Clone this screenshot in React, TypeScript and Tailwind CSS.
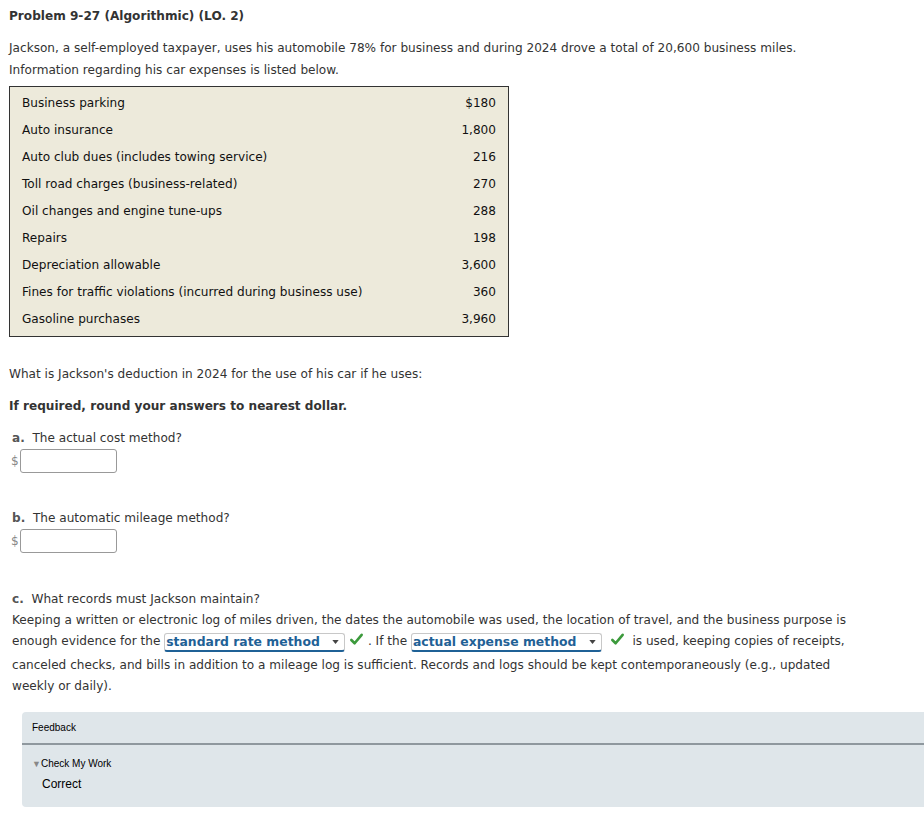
import { useState } from 'react'

const expenses = [
  { label: 'Business parking', amount: '$180' },
  { label: 'Auto insurance', amount: '1,800' },
  { label: 'Auto club dues (includes towing service)', amount: '216' },
  { label: 'Toll road charges (business-related)', amount: '270' },
  { label: 'Oil changes and engine tune-ups', amount: '288' },
  { label: 'Repairs', amount: '198' },
  { label: 'Depreciation allowable', amount: '3,600' },
  { label: 'Fines for traffic violations (incurred during business use)', amount: '360' },
  { label: 'Gasoline purchases', amount: '3,960' },
]

function Check() {
  return (
    <svg viewBox="0 0 16 16" className="inline-block h-[15px] w-[15px] align-[-2px]">
      <path d="M2.5 8.5 L6 12 L13.5 3" fill="none" stroke="#3c9a3c" strokeWidth="2.8" strokeLinecap="round" strokeLinejoin="round" />
    </svg>
  )
}

function Dropdown({ value, width }: { value: string; width: string }) {
  return (
    <span
      className={`relative mb-[3px] inline-flex h-[19px] items-center rounded-[3px] border border-[#c8c8c8] border-b-2 border-b-[#1f6196] pl-[1px] align-[-1px] ${width}`}
    >
      <span className="text-[12.4px] font-bold leading-[15px] text-[#1f6196]">{value}</span>
      <svg viewBox="0 0 8 5" className="absolute right-[5px] top-[6px] h-[4px] w-[7px]">
        <path d="M0 0 L8 0 L4 5 Z" fill="#444" />
      </svg>
    </span>
  )
}

function MoneyInput() {
  const [val, setVal] = useState('')
  return (
    <div className="flex items-center">
      <span className="w-[9px] text-[#888]">$</span>
      <input
        value={val}
        onChange={(e) => setVal(e.target.value)}
        className="h-[24px] w-[97px] rounded-[3px] border border-[#999] bg-white outline-none"
      />
    </div>
  )
}

export default function App() {
  return (
    <div className="min-h-screen bg-white text-[12.1px] text-[#333] font-['DejaVu_Sans',Verdana,sans-serif]">
      <div className="pl-[9px] pt-[7px]">
        {/* Title */}
        <h1 className="font-bold leading-[18px]">Problem 9-27 (Algorithmic) (LO. 2)</h1>

        <p className="mt-[12px] leading-[22px]">
          Jackson, a self-employed taxpayer, uses his automobile 78% for business and during 2024 drove a total of 20,600 business miles.
          <br />
          Information regarding his car expenses is listed below.
        </p>

        {/* Expense table */}
        <div className="mt-[5px] w-[500px] border border-[#333] bg-[#edeadb] px-[12px] py-[3px] text-[#111]">
          {expenses.map((row) => (
            <div key={row.label} className="flex h-[27px] items-center justify-between">
              <span>{row.label}</span>
              <span>{row.amount}</span>
            </div>
          ))}
        </div>

        <p className="mt-[28px] leading-[18px]">What is Jackson's deduction in 2024 for the use of his car if he uses:</p>
        <p className="mt-[14px] font-bold leading-[18px]">If required, round your answers to nearest dollar.</p>

        {/* a */}
        <div className="mt-[14px] pl-[3px]">
          <div className="leading-[18px]">
            <span className="font-bold text-[#555]">a.</span>&nbsp; The actual cost method?
          </div>
          <div className="mt-[2px] -ml-[1px]">
            <MoneyInput />
          </div>
        </div>

        {/* b */}
        <div className="mt-[36px] pl-[3px]">
          <div className="leading-[18px]">
            <span className="font-bold text-[#555]">b.</span>&nbsp; The automatic mileage method?
          </div>
          <div className="mt-[2px] -ml-[1px]">
            <MoneyInput />
          </div>
        </div>

        {/* c */}
        <div className="mt-[37px] pl-[3px]">
          <div className="leading-[18px]">
            <span className="font-bold text-[#555]">c.</span>&nbsp; What records must Jackson maintain?
          </div>
          <p className="mt-[2px] leading-[21px]">
            Keeping a written or electronic log of miles driven, the dates the automobile was used, the location of travel, and the business purpose is
            <br />
            enough evidence for the <Dropdown value="standard rate method" width="w-[181px]" /> <Check /> . If the{' '}
            <Dropdown value="actual expense method" width="w-[191px]" />&nbsp; <Check />&nbsp; is used, keeping copies of receipts,
            <br />
            canceled checks, and bills in addition to a mileage log is sufficient. Records and logs should be kept contemporaneously (e.g., updated
            <br />
            weekly or daily).
          </p>
        </div>
      </div>

      {/* Feedback */}
      <div className="ml-[22px] mt-[15px] rounded-l-[4px] bg-[#dfe6ea] pb-[16px] font-['Liberation_Sans',Arial,sans-serif] text-black">
        <div className="pl-[10px] pt-[10px] text-[10px] leading-[12px]">Feedback</div>
        <div className="mt-[9px] h-[2px] bg-[#8f989e]" />
        <div className="mt-[13px] pl-[10px] text-[10px] leading-[12px]">
          <span className="text-[9px] text-[#888]">▼</span>Check My Work
        </div>
        <div className="mt-[7px] pl-[20px] text-[12px] leading-[14px]">Correct</div>
      </div>
    </div>
  )
}
